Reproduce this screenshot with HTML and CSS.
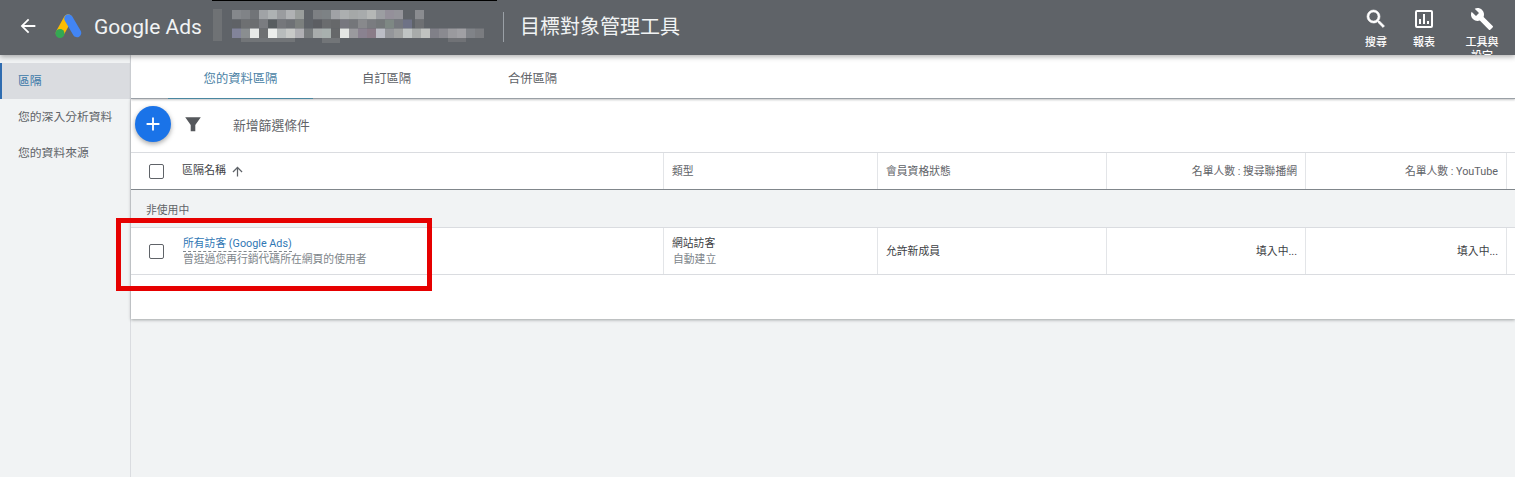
FILE: index.html
```html
<!DOCTYPE html>
<html lang="zh-Hant">
<head>
    <meta charset="UTF-8">
    <title>目標對象管理工具 - Google Ads</title>
    <link rel="stylesheet" href="styles.css">
</head>
<body>
    <header class="topbar">
        <svg class="back-icon" viewBox="0 0 24 24"><path d="M20 11H7.800l5.600-5.600L12 4l-8 8 8 8 1.400-1.400L7.800 13H20z" fill="#fff"/></svg>
        <svg class="ads-logo" viewBox="0 0 28 26">
            <path d="M13 5.500L5 20" stroke="#fbbc04" stroke-width="8.500" stroke-linecap="round"/>
            <path d="M13.500 5.500L22 20" stroke="#4285f4" stroke-width="8.500" stroke-linecap="round"/>
            <circle cx="5" cy="20.500" r="4.500" fill="#34a853"/>
        </svg>
        <span class="brand">Google Ads</span>
        <svg class="account-mosaic" viewBox="0 0 280 44">
            <g class="mosaic-blur">
                <rect x="1" y="9" width="9" height="32" fill="#6f7275"/>
                <rect x="20" y="10" width="9" height="9.500" fill="#85888c"/><rect x="29" y="10" width="9" height="9.500" fill="#808387"/><rect x="38" y="10" width="9" height="9.500" fill="#717478"/><rect x="47" y="10" width="9" height="9.500" fill="#a0a3a6"/><rect x="56" y="10" width="9" height="9.500" fill="#aeb2b3"/><rect x="65" y="10" width="9" height="9.500" fill="#9a9c9f"/><rect x="74" y="10" width="9" height="9.500" fill="#b0b2b4"/><rect x="83" y="10" width="9" height="9.500" fill="#9a9e9c"/>
                <rect x="101" y="10" width="9" height="9.500" fill="#7d8083"/><rect x="110" y="10" width="9" height="9.500" fill="#7d8285"/><rect x="119" y="10" width="9" height="9.500" fill="#a0a2a6"/><rect x="128" y="10" width="9" height="9.500" fill="#acafb0"/><rect x="137" y="10" width="9" height="9.500" fill="#a5a8a8"/><rect x="146" y="10" width="9" height="9.500" fill="#a8abac"/><rect x="155" y="10" width="9" height="9.500" fill="#b5b7b6"/><rect x="164" y="10" width="9" height="9.500" fill="#9c9ea2"/><rect x="173" y="10" width="9" height="9.500" fill="#94909a"/><rect x="182" y="10" width="9" height="9.500" fill="#94949a"/><rect x="203" y="10" width="9" height="9.500" fill="#8a8c90"/>
                <rect x="20" y="19.500" width="9" height="9" fill="#5f6266"/><rect x="29" y="19.500" width="9" height="9" fill="#6e7072"/><rect x="38" y="19.500" width="9" height="9" fill="#6c6e70"/><rect x="47" y="19.500" width="9" height="9" fill="#7a7c80"/><rect x="56" y="19.500" width="9" height="9" fill="#585d60"/><rect x="65" y="19.500" width="9" height="9" fill="#75777b"/><rect x="74" y="19.500" width="9" height="9" fill="#6e7175"/><rect x="83" y="19.500" width="9" height="9" fill="#7c807e"/>
                <rect x="101" y="19.500" width="9" height="9" fill="#5c5e62"/><rect x="110" y="19.500" width="9" height="9" fill="#6a6c6e"/><rect x="119" y="19.500" width="9" height="9" fill="#66686a"/><rect x="128" y="19.500" width="9" height="9" fill="#77777f"/><rect x="137" y="19.500" width="9" height="9" fill="#74767a"/><rect x="146" y="19.500" width="9" height="9" fill="#88898c"/><rect x="155" y="19.500" width="9" height="9" fill="#7a7c80"/><rect x="164" y="19.500" width="9" height="9" fill="#74787a"/><rect x="173" y="19.500" width="9" height="9" fill="#7e8884"/><rect x="182" y="19.500" width="9" height="9" fill="#75787e"/><rect x="191" y="19.500" width="9" height="9" fill="#6e7286"/><rect x="203" y="19.500" width="9" height="9" fill="#6e7073"/>
                <rect x="20" y="28.500" width="9" height="9.500" fill="#82849a"/><rect x="29" y="28.500" width="9" height="9.500" fill="#8a8e90"/><rect x="38" y="28.500" width="9" height="9.500" fill="#e8eae8"/><rect x="47" y="28.500" width="9" height="9.500" fill="#6e7072"/><rect x="56" y="28.500" width="9" height="9.500" fill="#eceeec"/><rect x="65" y="28.500" width="9" height="9.500" fill="#b8bcbc"/><rect x="74" y="28.500" width="9" height="9.500" fill="#c8cac8"/><rect x="83" y="28.500" width="9" height="9.500" fill="#b0b0b4"/><rect x="92" y="28.500" width="9" height="9.500" fill="#787c7e"/><rect x="101" y="28.500" width="9" height="9.500" fill="#a8acac"/><rect x="110" y="28.500" width="9" height="9.500" fill="#a8b0ae"/><rect x="119" y="28.500" width="9" height="9.500" fill="#66686a"/><rect x="128" y="28.500" width="9" height="9.500" fill="#e4e6e4"/><rect x="137" y="28.500" width="9" height="9.500" fill="#9a9a9e"/><rect x="146" y="28.500" width="9" height="9.500" fill="#8a8290"/><rect x="155" y="28.500" width="9" height="9.500" fill="#8a7c88"/><rect x="164" y="28.500" width="9" height="9.500" fill="#bcbec6"/><rect x="173" y="28.500" width="9" height="9.500" fill="#94969a"/><rect x="182" y="28.500" width="9" height="9.500" fill="#a0a2a2"/><rect x="191" y="28.500" width="9" height="9.500" fill="#c0c4c4"/><rect x="200" y="28.500" width="9" height="9.500" fill="#a8abaa"/><rect x="209" y="28.500" width="9" height="9.500" fill="#c0c2c0"/><rect x="218" y="28.500" width="9" height="9.500" fill="#808088"/><rect x="227" y="28.500" width="9" height="9.500" fill="#8a8a90"/><rect x="236" y="28.500" width="9" height="9.500" fill="#9a9a9e"/><rect x="245" y="28.500" width="9" height="9.500" fill="#a0a0a4"/><rect x="254" y="28.500" width="9" height="9.500" fill="#808388"/><rect x="263" y="28.500" width="9" height="9.500" fill="#7a7c80"/>
                <rect x="29" y="38" width="54" height="4" fill="#727578"/><rect x="110" y="38" width="18" height="5" fill="#727578"/><rect x="236" y="38" width="18" height="4" fill="#707276"/>
            </g>
        </svg>
        <div class="title-divider"></div>
        <div class="page-title">目標對象管理工具</div>
        <nav class="top-actions">
            <div class="top-action">
                <svg viewBox="0 0 24 24"><path d="M15.500 14h-.79l-.28-.27A6.470 6.470 0 0 0 16 9.500 6.500 6.500 0 1 0 9.500 16c1.610 0 3.090-.59 4.230-1.570l.27.28v.79l5 4.990L20.490 19l-4.990-5zm-6 0C7.010 14 5 11.990 5 9.500S7.010 5 9.500 5 14 7.010 14 9.500 11.990 14 9.500 14z" fill="#fff" stroke="#fff" stroke-width="0.600"/></svg>
                <span>搜尋</span>
            </div>
            <div class="top-action">
                <svg viewBox="0 0 24 24"><path d="M19 3H5a2 2 0 0 0-2 2v14a2 2 0 0 0 2 2h14a2 2 0 0 0 2-2V5a2 2 0 0 0-2-2zm0 16H5V5h14zM7 12h2v5H7zm4-5h2v10h-2zm4 7h2v3h-2z" fill="#fff"/></svg>
                <span>報表</span>
            </div>
            <div class="top-action action-tools">
                <svg viewBox="0 0 24 24"><path d="M22.700 19l-9.100-9.100c.9-2.300.4-5-1.500-6.900-2-2-5-2.400-7.400-1.300L9 6 6 9 1.600 4.700C.4 7.100.9 10.100 2.900 12.100c1.900 1.900 4.600 2.400 6.900 1.500l9.100 9.100c.4.400 1 .4 1.400 0l2.300-2.300c.5-.4.500-1.100.1-1.400z" fill="#fff"/></svg>
                <span>工具與設定</span>
            </div>
        </nav>
    </header>

    <div class="page">
        <aside class="sidebar">
            <div class="side-item active">區隔</div>
            <div class="side-item">您的深入分析資料</div>
            <div class="side-item">您的資料來源</div>
        </aside>

        <main class="content">
            <div class="tabs">
                <div class="tab active">您的資料區隔</div>
                <div class="tab">自訂區隔</div>
                <div class="tab">合併區隔</div>
            </div>

            <div class="card">
                <div class="filter-bar">
                    <div class="fab">
                        <svg viewBox="0 0 24 24"><path d="M19 13h-6v6h-2v-6H5v-2h6V5h2v6h6z" fill="#fff"/></svg>
                    </div>
                    <svg class="filter-icon" viewBox="0 0 24 24"><path d="M3.500 4.500h17L14.500 13v7h-5v-7z" fill="#55585c"/></svg>
                    <span class="filter-text">新增篩選條件</span>
                </div>

                <div class="table-row table-head">
                    <div class="cell name-cell">
                        <span class="checkbox"></span>
                        <span class="name-head">區隔名稱</span>
                        <svg class="sort-icon" viewBox="0 0 24 24"><path d="M4 12l1.400 1.400L11 7.800V20h2V7.800l5.600 5.600L20 12l-8-8z" fill="#5f6368"/></svg>
                    </div>
                    <div class="cell">類型</div>
                    <div class="cell">會員資格狀態</div>
                    <div class="cell right">名單人數 : 搜尋聯播網</div>
                    <div class="cell right">名單人數 : YouTube</div>
                    <div class="cell"></div>
                </div>

                <div class="group-row">非使用中</div>

                <div class="table-row table-body">
                    <div class="cell name-cell">
                        <span class="checkbox"></span>
                        <div>
                            <a class="audience-link">所有訪客 (Google Ads)</a>
                            <div class="sub-text">曾逛過您再行銷代碼所在網頁的使用者</div>
                        </div>
                    </div>
                    <div class="cell">
                        <div>
                            <div>網站訪客</div>
                            <div class="sub-text">自動建立</div>
                        </div>
                    </div>
                    <div class="cell">允許新成員</div>
                    <div class="cell right">填入中...</div>
                    <div class="cell right">填入中...</div>
                    <div class="cell"></div>
                </div>

                <div class="table-end"></div>
            </div>
        </main>
    </div>

    <div class="top-edge"></div>
    <div class="highlight-box"></div>
</body>
</html>
```

FILE: styles.css
```css
body {
    font-family: Roboto, "Noto Sans CJK TC", sans-serif;
    font-size: 12px;
    color: #3c4043;
    background-color: #f1f3f4;
    margin: 0;
    height: 477px;
    overflow: hidden;
    position: relative;
}

/* top bar */
.topbar {
    height: 55px;
    box-sizing: border-box;
    padding-bottom: 4px;
    background-color: #5f6368;
    display: flex;
    align-items: center;
    color: #fff;
    position: relative;
    z-index: 2;
    box-shadow: 0 2px 5px rgba(0, 0, 0, 0.3);
}
.back-icon {
    width: 22px;
    height: 22px;
    margin-left: 17px;
}
.ads-logo {
    width: 28px;
    height: 26px;
    margin-left: 16px;
}
.brand {
    font-size: 21px;
    margin-left: 11px;
    color: #f1f3f4;
    width: 108px;
    position: relative;
    top: 1px;
}
.account-mosaic {
    width: 280px;
    height: 44px;
    margin-left: 10px;
    flex-shrink: 0;
    align-self: flex-start;
}
.mosaic-blur {
    filter: blur(0.6px);
}
.title-divider {
    width: 1px;
    height: 30px;
    background-color: #9aa0a6;
    margin-left: 11px;
    align-self: flex-start;
    margin-top: 12px;
}
.page-title {
    font-size: 20px;
    margin-left: 16px;
    color: #f1f3f4;
}
.top-actions {
    margin-left: auto;
    display: flex;
    height: 55px;
    overflow: hidden;
    align-self: flex-start;
}
.top-action {
    display: flex;
    flex-direction: column;
    align-items: center;
    width: 48px;
    padding-top: 7px;
    box-sizing: border-box;
}
.top-action svg {
    width: 24px;
    height: 24px;
    flex-shrink: 0;
}
.top-action span {
    font-size: 11px;
    line-height: 14px;
    margin-top: 5px;
    text-align: center;
    width: 36px;
    font-weight: 500;
}
.action-tools {
    width: 58px;
    margin-left: 5px;
    margin-right: 4px;
}

/* layout under the bar */
.page {
    display: flex;
    height: 422px;
}
.sidebar {
    width: 130px;
    border-right: 1px solid #dadce0;
    padding-top: 8px;
    flex-shrink: 0;
}
.side-item {
    height: 36px;
    line-height: 36px;
    padding-left: 18px;
    color: #5f6368;
    font-size: 11.800px;
}
.side-item.active {
    background-color: #dadce0;
    color: #3b78a8;
    border-left: 2px solid #2f6cb0;
    padding-left: 16px;
}
.content {
    flex: 1;
    min-width: 0;
}

/* tabs */
.tabs {
    height: 44px;
    box-sizing: border-box;
    background-color: #fff;
    display: flex;
    gap: 1px;
    padding-left: 37px;
    border-bottom: 1px solid #9aa0a6;
    box-shadow: 0 1px 2px rgba(60, 64, 67, 0.3);
    position: relative;
}
.tab {
    width: 145px;
    text-align: center;
    line-height: 48px;
    color: #5f6368;
    font-size: 12.300px;
}
.tab.active {
    color: #4a7fa5;
    border-bottom: 1px solid #4a87a0;
    height: 43px;
}

/* table card */
.card {
    background-color: #fff;
    box-shadow: 0 1px 3px rgba(60, 64, 67, 0.45);
}
.filter-bar {
    height: 53px;
    box-sizing: border-box;
    padding: 0 0 3px 4px;
    display: flex;
    align-items: center;
}
.fab {
    width: 36px;
    height: 36px;
    border-radius: 50%;
    background-color: #1a73e8;
    display: flex;
    align-items: center;
    justify-content: center;
    box-shadow: 0 2px 5px rgba(0, 0, 0, 0.35);
}
.fab svg {
    width: 22px;
    height: 22px;
}
.filter-icon {
    width: 22px;
    height: 22px;
    margin-left: 11px;
}
.filter-text {
    margin-left: 29px;
    color: #5f6368;
    font-size: 12.800px;
}
.table-row {
    display: grid;
    grid-template-columns: 532px 214px 229px 199px 201px 1fr;
    font-size: 10.800px;
}
.table-head {
    height: 38px;
    box-sizing: border-box;
    border-top: 1px solid #dadce0;
    border-bottom: 1px solid #80868b;
    color: #5f6368;
}
.table-body {
    height: 47px;
    box-sizing: border-box;
    border-bottom: 1px solid #dadce0;
    color: #3c4043;
}
.cell {
    display: flex;
    align-items: center;
    padding: 2px 8px 0;
    border-left: 1px solid #e3e5e8;
    line-height: 16px;
    min-width: 0;
}
.cell.right {
    justify-content: flex-end;
}
.name-cell {
    border-left: 0;
    padding-left: 18px;
    gap: 18px;
}
.table-head .name-cell {
    padding-top: 0;
}
.name-head {
    color: #3c4043;
    font-size: 11px;
}
.checkbox {
    width: 13px;
    height: 13px;
    border: 1px solid #5f6368;
    border-radius: 2px;
    flex-shrink: 0;
}
.table-body .checkbox {
    margin-top: -2px;
}
.sort-icon {
    width: 15px;
    height: 15px;
    margin-left: -14.500px;
}
.group-row {
    height: 38px;
    box-sizing: border-box;
    background-color: #f1f3f4;
    border-bottom: 1px solid #dadce0;
    padding-left: 15px;
    line-height: 41px;
    color: #5f6368;
    font-size: 10.800px;
}
.audience-link {
    color: #2f77b5;
    border-bottom: 1px dashed #80868b;
    display: inline-block;
    line-height: 14px;
    margin-left: 1px;
}
.sub-text {
    color: #80868b;
    margin-left: 1px;
}
.table-end {
    height: 44px;
}

/* things drawn over the page */
.top-edge {
    position: absolute;
    left: 212px;
    top: 0;
    width: 285px;
    height: 1px;
    background-color: #000;
    z-index: 3;
}
.highlight-box {
    position: absolute;
    left: 116px;
    top: 218px;
    width: 306px;
    height: 63px;
    border: 5px solid #e60000;
    z-index: 3;
}
```
